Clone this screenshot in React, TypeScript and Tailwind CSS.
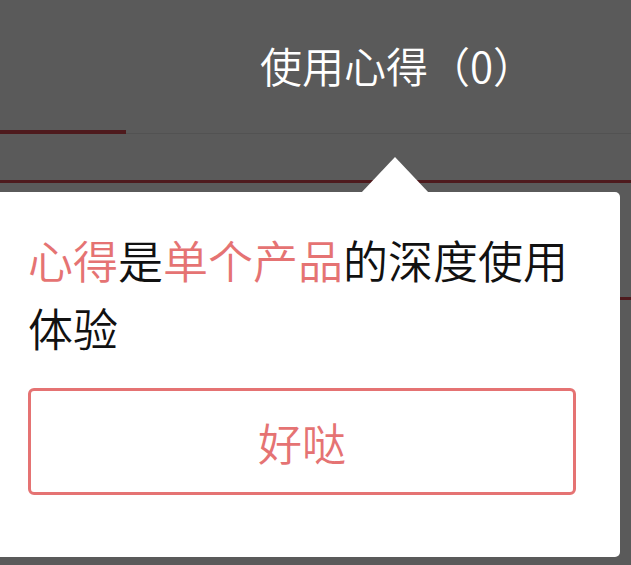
import React from 'react'

const cjk = { fontFamily: '"Noto Sans CJK SC", "Noto Sans", sans-serif' }

function Arrow() {
  return (
    <svg
      className="absolute left-[361px] top-[-35px]"
      width="68"
      height="36"
      viewBox="0 0 68 36"
    >
      <polygon points="34,0 68,36 0,36" fill="#ffffff" />
    </svg>
  )
}

export default function App() {
  return (
    <div className="w-[631px] h-[565px] overflow-hidden bg-[#5a5a5a] font-[350]" style={cjk}>
      {/* header */}
      <div className="h-[130px] pt-[44px] pl-[260px]">
        <div className="text-[42px] leading-none text-white">使用心得（0）</div>
      </div>

      {/* tab underline */}
      <div className="relative h-[5px]">
        <div className="absolute left-0 right-0 top-[3px] h-px bg-[#525252]" />
        <div className="relative w-[126px] h-[4px] bg-[#4e1a1d]" />
      </div>

      <div className="h-[45px]" />
      <div className="h-[3px] bg-[#4e1a1d]" />
      <div className="h-[9px]" />

      {/* tooltip */}
      <div className="flex">
        <div className="relative w-[620px] rounded-r-[5px] bg-white pt-[34px] pb-[62px] pl-[28px] pr-[44px]">
          <Arrow />
          <p className="text-[45px] leading-[68px] text-[#111111]">
            <span className="text-[#e57373]">心得</span>是<span className="text-[#e57373]">单个产品</span>的深度使用体验
          </p>
          <button className="mt-[26px] flex h-[107px] w-full items-center justify-center rounded-[6px] border-[3px] border-[#e57373] text-[44px] leading-none text-[#e57373]">
            好哒
          </button>
        </div>
        <div className="flex-1 pt-[105px]">
          <div className="h-[3px] bg-[#4e1a1d]" />
        </div>
      </div>
    </div>
  )
}
